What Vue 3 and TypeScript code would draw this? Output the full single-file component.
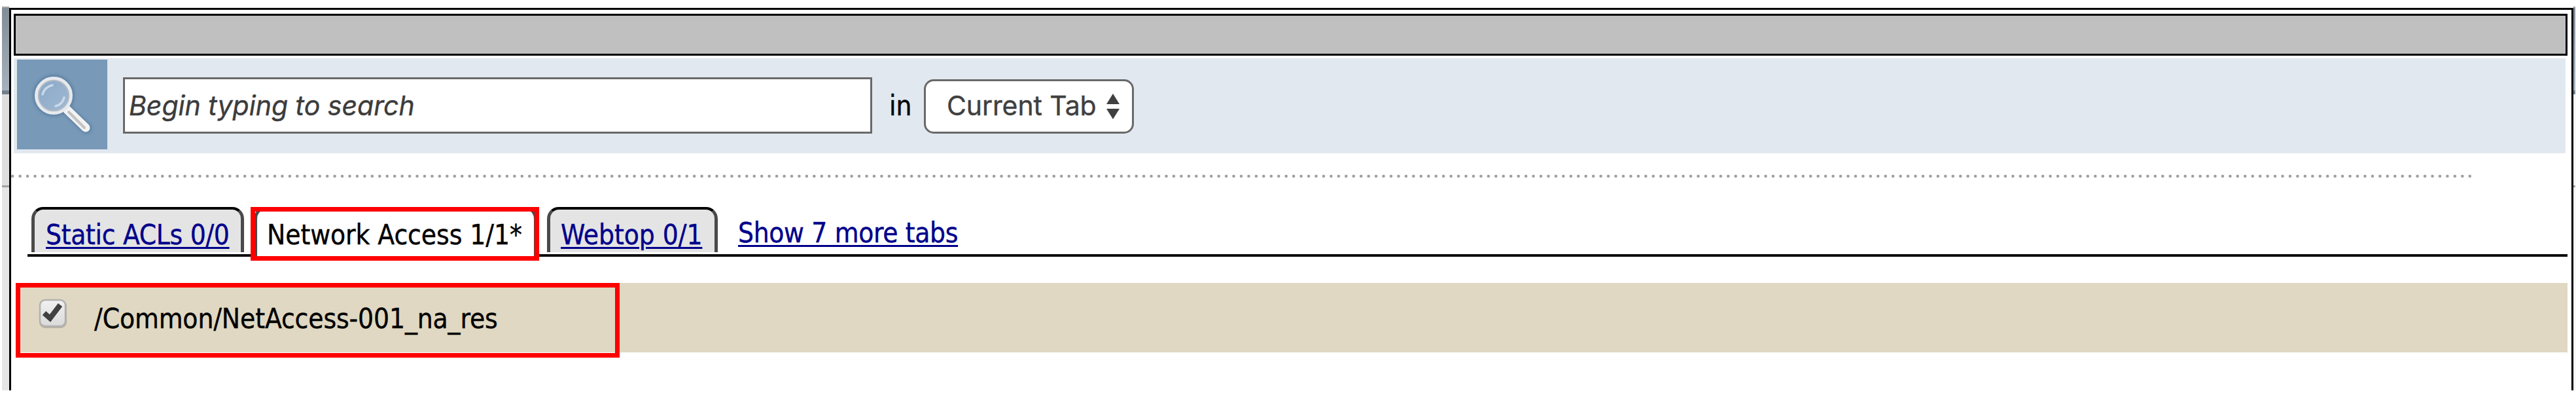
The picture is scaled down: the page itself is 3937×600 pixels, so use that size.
<script setup lang="ts">
interface Tab {
  id: string
  label: string
  active: boolean
}

const tabs: Tab[] = [
  { id: 'acls', label: 'Static ACLs 0/0', active: false },
  { id: 'network', label: 'Network Access 1/1*', active: true },
  { id: 'webtop', label: 'Webtop 0/1', active: false },
]

const resources: string[] = ['/Common/NetAccess-001_na_res']
</script>

<template>
  <div class="page">
    <div class="edge edge-left"><i class="head"></i><i class="upper"></i><i class="lower"></i></div>
    <main class="dialog">
      <div class="titlebar"></div>

      <div class="search">
        <div class="search-icon">
          <svg width="138" height="137" viewBox="0 0 138 137">
            <defs>
              <linearGradient id="lens" x1="0" y1="0" x2="1" y2="1">
                <stop offset="0" stop-color="#87a8c9" />
                <stop offset="1" stop-color="#a3b9d1" />
              </linearGradient>
              <filter id="glow" x="-20%" y="-20%" width="140%" height="140%">
                <feGaussianBlur stdDeviation="2" />
              </filter>
            </defs>
            <g fill="none" stroke="#55789b" opacity=".75" filter="url(#glow)">
              <circle cx="56" cy="55" r="27" stroke-width="9" />
              <path d="M76 76L106 105" stroke-width="16" stroke-linecap="round" />
            </g>
            <path d="M76 76L105 104" stroke="#f2f3f5" stroke-width="13" stroke-linecap="round" />
            <path d="M79 80L103 104" stroke="#c4c2c2" stroke-width="4" stroke-linecap="round" />
            <circle cx="56" cy="55" r="26" fill="url(#lens)" stroke="#e6eaee" stroke-width="6" />
            <circle cx="56" cy="55" r="23.3" fill="none" stroke="#b4bcc5" stroke-width="2" />
            <path d="M39 53Q42 42 54 39M59 71Q69 69 72 58" fill="none" stroke="#c9d9e9" stroke-width="3.5" stroke-linecap="round" />
          </svg>
        </div>
        <div class="search-input">Begin typing to search</div>
        <span class="in">in</span>
        <div class="select">
          <span>Current Tab</span>
          <svg width="20" height="39" viewBox="0 0 20 39">
            <path d="M10 0L20 16H0ZM0 23H20L10 39Z" fill="#404040" />
          </svg>
        </div>
      </div>

      <svg class="dots" width="3765" height="6">
        <line x1="2.2" y1="3" x2="3765" y2="3" stroke="#a0a0a0" stroke-width="4.6" stroke-linecap="round" stroke-dasharray="0.01 11.44" />
      </svg>

      <nav class="tabs">
        <div v-for="tab in tabs" :key="tab.id" class="tab" :class="[tab.id, { active: tab.active }]">
          <span v-if="tab.active">{{ tab.label }}</span>
          <a v-else>{{ tab.label }}</a>
          <i v-if="tab.active" class="mark"></i>
        </div>
        <a class="more">Show 7 more tabs</a>
      </nav>

      <div v-for="name in resources" :key="name" class="resource">
        <svg class="check" width="44" height="46" viewBox="0 0 44 46">
          <defs>
            <linearGradient id="box" x1="0" y1="0" x2="0" y2="1">
              <stop offset="0" stop-color="#f1f1f1" />
              <stop offset="1" stop-color="#dadada" />
            </linearGradient>
          </defs>
          <rect x="2" y="3" width="40" height="41" rx="8" fill="none" stroke="#b9b3a3" stroke-width="2" />
          <rect x="2" y="2" width="39" height="40" rx="8" fill="url(#box)" stroke="#b1b1b1" stroke-width="2.5" />
          <path d="M8.500 22L17.500 30L33 9.500" fill="none" stroke="#404040" stroke-width="8" />
        </svg>
        <span>{{ name }}</span>
        <i class="mark"></i>
      </div>
    </main>
    <div class="edge edge-right"><i class="head"></i><i class="upper"></i><i class="lower"></i></div>
  </div>
</template>

<style>
html, body { margin: 0; background: #fff; }
</style>

<style scoped>
.page {
  display: flex;
  box-sizing: border-box;
  width: 3937px;
  height: 600px;
  padding: 10px 1px 4px 3px;
  overflow: hidden;
  background: #fff;
  color: #000;
  font: 42px/50px "DejaVu Sans Condensed", "DejaVu Sans", sans-serif;
  -webkit-text-stroke: 0.4px currentColor;
}
.edge { display: flex; flex-direction: column; height: 586px; }
.edge-left { width: 11px; }
.edge-right { width: 3px; }
.edge i { box-sizing: border-box; display: block; }
.head { height: 134px; background: linear-gradient(#838d97, #a6b1bc); border-top: 2px solid #a5a5a5; border-bottom: 6px solid #73808b; }
.upper { height: 142px; background: #dedede; border-bottom: 3px solid #a2a2a2; }
.lower { flex: 1; background: #e6e6e6; }
.edge-right .upper, .edge-right .lower { background: #f1f1f1; }

.dialog {
  box-sizing: border-box;
  width: 3919px;
  height: 584px;
  margin-top: 2px;
  border: 3px solid #000;
  border-bottom: 0;
  background: #fff;
}
.titlebar {
  box-sizing: border-box;
  height: 64px;
  margin: 6px 6px 4px 4px;
  border: 3px solid #000;
  background: #c0c0c0;
}
.search {
  display: flex;
  box-sizing: border-box;
  height: 145px;
  margin: 0 9px 0 4px;
  padding: 2px 0 0 5px;
  background: #e1e8ef;
}
.search-icon { width: 138px; height: 137px; background: #7899b8; }
.search-icon svg { display: block; }
.search-input {
  box-sizing: border-box;
  width: 1145px;
  height: 86px;
  margin: 27px 0 0 24px;
  padding-left: 6px;
  border: 3px solid #696969;
  background: #fff;
  color: #3c3c3c;
  font: italic 41px/81px Inter, sans-serif;
}
.in { width: 53px; margin: 46px 0 0 26px; }
.select {
  display: flex;
  align-items: center;
  box-sizing: border-box;
  width: 321px;
  height: 83px;
  margin-top: 30px;
  padding: 0 19px 3px 32px;
  border: 3px solid #696969;
  border-radius: 15px;
  background: #fff;
  color: #404040;
  font: 41px/50px Inter, sans-serif;
}
.select span { flex: 1; white-space: nowrap; letter-spacing: -0.1px; }
.select svg { margin-top: 2px; }
.dots { display: block; margin-top: 32px; }

.tabs {
  display: flex;
  box-sizing: border-box;
  height: 76px;
  margin: 44px 6px 0 25px;
  padding-left: 6px;
  border-bottom: 4px solid #0a0a0a;
}
.tab {
  position: relative;
  box-sizing: border-box;
  height: 69px;
  margin-right: 15px;
  padding: 14px 0 0 17px;
  border: 5px solid #4a4a4a;
  border-top: 4px solid #000;
  border-bottom: 0;
  border-radius: 18px 18px 0 0;
  background: #e4e4e4;
  white-space: nowrap;
}
.acls { width: 325px; letter-spacing: -0.3px; }
.network { width: 433px; height: 76px; padding-left: 15px; letter-spacing: -0.05px; }
.webtop { width: 261px; padding-left: 16px; letter-spacing: -0.05px; }
.active { background: #fff; }
a {
  color: #00008b;
  text-decoration: underline;
  text-decoration-thickness: 3px;
  text-underline-offset: 4px;
  text-decoration-skip-ink: none;
}
.webtop a { text-decoration-skip-ink: auto; }
.more { height: 50px; margin: 15px 0 0 16px; letter-spacing: -0.33px; }
.mark { position: absolute; box-sizing: border-box; border: 7px solid #f00; }
.tab .mark { left: -10px; top: -4px; width: 441px; height: 82px; }

.resource {
  position: relative;
  display: flex;
  box-sizing: border-box;
  height: 106px;
  margin: 40px 6px 0 8px;
  padding: 24px 0 0 34px;
  background: #e0d8c2;
}
.check { display: block; flex: none; margin-right: 41px; }
.resource span { margin-top: 6px; letter-spacing: -0.1px; white-space: nowrap; }
.resource .mark { left: -1px; top: 0; width: 923px; height: 114px; }
</style>
